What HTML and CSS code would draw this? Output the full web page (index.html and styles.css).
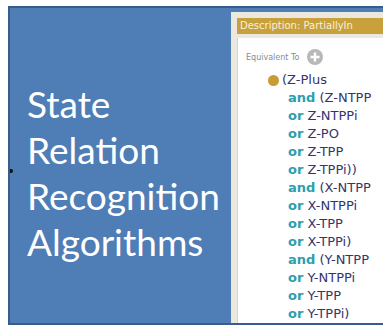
FILE: index.html
```html
<!DOCTYPE html>
<html lang="en">
<head>
    <meta charset="UTF-8">
    <meta name="viewport" content="width=device-width, initial-scale=1.0">
    <link rel="stylesheet" href="styles.css">
</head>
<body>

<div class="slide">
    <span class="handle"></span>
    <div class="title">
        <div>State</div>
        <div>Relation</div>
        <div>Recognition</div>
        <div>Algorithms</div>
    </div>

    <div class="panel">
        <div class="panel-head">Description: PartiallyIn</div>
        <div class="panel-box">
            <div class="equiv">
                Equivalent To
                <span class="add">
                    <svg width="16" height="16" viewBox="0 0 16 16">
                        <circle cx="8" cy="8" r="8" fill="#b8b8b8"/>
                        <path d="M8 3.5v9M3.5 8h9" stroke="#fff" stroke-width="2.4"/>
                    </svg>
                </span>
            </div>
            <div class="expr">
                <div class="line first"><span class="dot"></span>(Z-Plus</div>
                <div class="line"><b>and</b> (Z-NTPP</div>
                <div class="line"><b>or</b> Z-NTPPi</div>
                <div class="line"><b>or</b> Z-PO</div>
                <div class="line"><b>or</b> Z-TPP</div>
                <div class="line"><b>or</b> Z-TPPi))</div>
                <div class="line"><b>and</b> (X-NTPP</div>
                <div class="line"><b>or</b> X-NTPPi</div>
                <div class="line"><b>or</b> X-TPP</div>
                <div class="line"><b>or</b> X-TPPi)</div>
                <div class="line"><b>and</b> (Y-NTPP</div>
                <div class="line"><b>or</b> Y-NTPPi</div>
                <div class="line"><b>or</b> Y-TPP</div>
                <div class="line"><b>or</b> Y-TPPi)</div>
            </div>
        </div>
    </div>
</div>

</body>
</html>
```

FILE: styles.css
```css
body {
    margin: 0;
    padding: 0;
    background: #fff;
    overflow: hidden;
}
.slide {
    position: relative;
    display: flex;
    margin: 6px 0 0 8px;
    width: 373px;
    height: 315px;
    background-color: #4f7db6;
    border: 2px solid #385d8a;
    border-right: none;
    overflow: hidden;
}
.handle {
    position: absolute;
    left: 0;
    top: 161px;
    width: 3px;
    height: 4px;
    border-radius: 0 2px 2px 0;
    background: #111;
}
.title {
    width: 204px;
    padding: 73px 0 0 17px;
    font-family: Lato, sans-serif;
    font-size: 37px;
    line-height: 46px;
    color: #fff;
}
.panel {
    flex: 1;
    display: flex;
    flex-direction: column;
    margin-top: 4px;
    padding: 6px 0 0 6px;
    background-color: #ebe9df;
}
.panel-head {
    height: 16px;
    padding-left: 3px;
    background-color: #c9a13c;
    color: #f6f0dc;
    font-family: 'DejaVu Sans', sans-serif;
    font-size: 10px;
    line-height: 16px;
    white-space: nowrap;
}
.panel-box {
    flex: 1;
    margin-top: 4px;
    padding: 11px 0 0 8px;
    background-color: #fff;
    border-left: 1px solid #d8d5c8;
}
.equiv {
    display: flex;
    align-items: center;
    height: 16px;
    font-family: 'DejaVu Sans', sans-serif;
    font-size: 8px;
    color: #8a8a8a;
}
.add {
    display: flex;
    margin-left: 8px;
}
.expr {
    margin: 6px 0 0 22px;
    font-family: 'DejaVu Sans', sans-serif;
    font-size: 13px;
    line-height: 18px;
    color: #36346c;
}
.line {
    padding-left: 20px;
    white-space: nowrap;
}
.line.first {
    display: flex;
    align-items: center;
    padding-left: 0;
}
.line b {
    color: #2a9fb0;
}
.dot {
    width: 11px;
    height: 11px;
    margin-right: 3px;
    border-radius: 50%;
    background-color: #c99a35;
}
```
